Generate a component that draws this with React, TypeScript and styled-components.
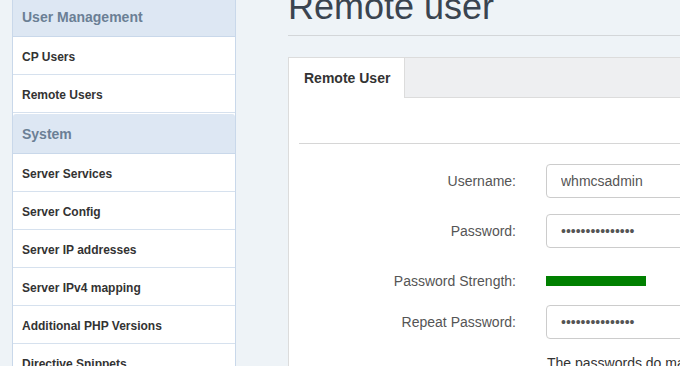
import React, { FC } from 'react';
import styled, { createGlobalStyle } from 'styled-components';

const GlobalStyle = createGlobalStyle`
  html, body {
    margin: 0;
    padding: 0;
    background: #eef3f7;
    font-family: 'Liberation Sans', Arial, sans-serif;
    overflow: hidden;
  }
`;

const Page = styled.div`
  display: flex;
  align-items: flex-start;
  width: 1100px;
  padding-left: 12px;
`;

const Sidebar = styled.nav`
  width: 222px;
  margin-top: -3px;
  background: #ffffff;
  border-left: 1px solid #c9d8ea;
  border-right: 1px solid #c9d8ea;
  flex-shrink: 0;
`;

const Group = styled.div`
  & + & {
    margin-top: 1px;
  }
`;

const GroupTitle = styled.div`
  height: 39px;
  display: flex;
  align-items: center;
  padding: 0 9px;
  background: #dde7f3;
  border-bottom: 1px solid #c9d8ea;
  border-radius: 3px 3px 0 0;
  color: #6b7f95;
  font-size: 14px;
  font-weight: bold;
`;

const Item = styled.a`
  display: flex;
  align-items: center;
  height: 35px;
  padding: 2px 9px 0;
  border-bottom: 1px solid #d6e1ee;
  color: #333333;
  font-size: 12px;
  font-weight: bold;
  text-decoration: none;
`;

const Main = styled.main`
  margin-left: 52px;
  width: 760px;
`;

const Title = styled.h1`
  margin: -11px 0 0;
  font-size: 36px;
  font-weight: 400;
  line-height: 36px;
  color: #3a4450;
  padding-bottom: 10px;
  border-bottom: 1px solid #d3d6d9;
`;

const Panel = styled.section`
  margin-top: 21px;
  background: #ffffff;
  border: 1px solid #dcdcdc;
  border-bottom: none;
`;

const TabBar = styled.div`
  display: flex;
  height: 40px;
  background: #eeeff1;
`;

const Tab = styled.div<{ active?: boolean }>`
  display: flex;
  align-items: center;
  padding: 0 0 0 15px;
  width: 116px;
  box-sizing: border-box;
  white-space: nowrap;
  background: ${p => (p.active ? '#ffffff' : 'transparent')};
  border-right: 1px solid #dcdcdc;
  color: #333333;
  font-size: 14px;
  font-weight: bold;
`;

const TabRest = styled.div`
  flex: 1;
  border-bottom: 1px solid #dcdcdc;
`;

const Body = styled.div`
  padding: 0 10px;
`;

const Divider = styled.div`
  height: 45px;
  border-bottom: 1px solid #d6d6d6;
`;

const Form = styled.div`
  display: grid;
  grid-template-columns: 217px 300px;
  column-gap: 30px;
  row-gap: 16px;
  align-items: center;
  padding-top: 20px;
`;

const Label = styled.label<{ bottom?: boolean }>`
  align-self: ${p => (p.bottom ? 'end' : 'center')};
  text-align: right;
  font-size: 14px;
  line-height: 16px;
  color: #555555;
`;

const Input = styled.input`
  height: 34px;
  box-sizing: border-box;
  padding: 0 14px;
  border: 1px solid #cccccc;
  border-radius: 4px;
  font-family: 'Liberation Sans', Arial, sans-serif;
  font-size: 14px;
  color: #555555;
  outline: none;
`;

const Strength = styled.div`
  padding: 12px 0 3px;
`;

const StrengthBar = styled.div`
  height: 10px;
  background: #008000;
`;

const Note = styled.p`
  grid-column: 2;
  margin: 0;
  padding-left: 1px;
  font-size: 14px;
  color: #333333;
  white-space: nowrap;
`;

const groups = [
  { title: 'User Management', items: ['CP Users', 'Remote Users'] },
  {
    title: 'System',
    items: [
      'Server Services',
      'Server Config',
      'Server IP addresses',
      'Server IPv4 mapping',
      'Additional PHP Versions',
      'Directive Snippets'
    ]
  }
];

const App: FC = () => (
  <>
    <GlobalStyle />
    <Page>
      <Sidebar>
        {groups.map(g => (
          <Group key={g.title}>
            <GroupTitle>{g.title}</GroupTitle>
            {g.items.map(i => (
              <Item key={i} href="#">
                {i}
              </Item>
            ))}
          </Group>
        ))}
      </Sidebar>
      <Main>
        <Title>Remote user</Title>
        <Panel>
          <TabBar>
            <Tab active>Remote User</Tab>
            <TabRest />
          </TabBar>
          <Body>
            <Divider />
            <Form>
              <Label>Username:</Label>
              <Input type="text" defaultValue="whmcsadmin" />
              <Label>Password:</Label>
              <Input type="password" defaultValue="aaaaaaaaaaaaaaa" />
              <Label bottom>Password Strength:</Label>
              <Strength>
                <StrengthBar style={{ width: '100px' }} />
              </Strength>
              <Label>Repeat Password:</Label>
              <Input type="password" defaultValue="aaaaaaaaaaaaaaa" />
              <Note>The passwords do match</Note>
            </Form>
          </Body>
        </Panel>
      </Main>
    </Page>
  </>
);

export default App;
